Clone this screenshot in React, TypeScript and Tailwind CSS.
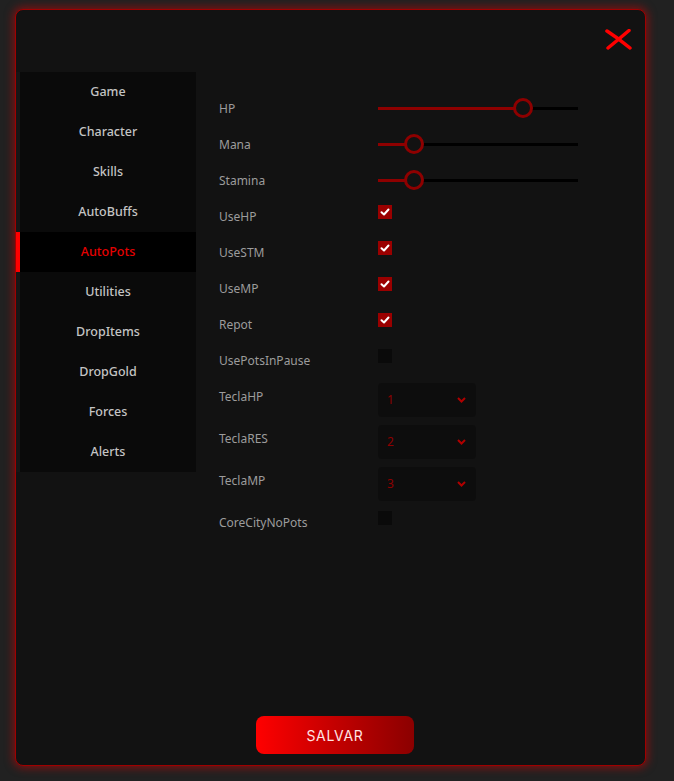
import { useState } from 'react';

const tabs = ['Game', 'Character', 'Skills', 'AutoBuffs', 'AutoPots', 'Utilities', 'DropItems', 'DropGold', 'Forces', 'Alerts'];

const Slider = ({ value }: { value: number }) => (
    <div className="relative mb-[2px] w-[200px] h-[3px] bg-black">
        <div className="absolute left-0 top-0 h-[3px] bg-[#8e0000]" style={{ width: `${value}%` }} />
        <div
            className="absolute top-1/2 w-[20px] h-[20px] -translate-x-1/2 -translate-y-1/2 rounded-full border-[3px] border-[#8e0000] bg-[#121212]"
            style={{ left: `${value}%` }}
        />
    </div>
);

const Check = ({ checked }: { checked: boolean }) => (
    <div className={`mb-[11px] w-[14px] h-[14px] flex items-center justify-center ${checked ? 'bg-[#9a0000]' : 'bg-[#0a0a0a]'}`}>
        {checked && (
            <svg width="10" height="10" viewBox="0 0 10 10">
                <path d="M1.5 5.2 L4 7.5 L8.5 2.5" fill="none" stroke="#fff" strokeWidth="2" strokeLinecap="round" strokeLinejoin="round" />
            </svg>
        )}
    </div>
);

const Select = ({ value }: { value: string }) => (
    <div className="mt-[4px] w-[98px] h-[34px] rounded bg-[#0d0d0d] flex items-center justify-between pl-[9px] pr-[10px]">
        <span className="text-[12px] text-[#8e0000]">{value}</span>
        <svg width="9" height="6" viewBox="0 0 9 6">
            <path d="M1 1 L4.5 4.5 L8 1" fill="none" stroke="#b00000" strokeWidth="2" />
        </svg>
    </div>
);

const Row = ({ label, children, tall }: { label: string; children: React.ReactNode; tall?: boolean }) => (
    <div className={`flex ${tall ? 'h-[42px] items-start' : 'h-9 items-center'}`}>
        <div className={`w-[159px] text-[12px] text-[#9c9c9c] ${tall ? 'leading-9' : ''}`}>{label}</div>
        {children}
    </div>
);

export default function App() {
    const [active, setActive] = useState('AutoPots');

    return (
        <div className="min-h-screen bg-[#212121] pt-[9px] pl-[15px]" style={{ fontFamily: '"Noto Sans", "Open Sans", sans-serif' }}>
            <div className="w-[631px] h-[757px] rounded-lg bg-[#121212] border border-[#a00000] shadow-[0_0_8px_2px_rgba(225,0,0,0.5)] flex flex-col">
                <div className="h-[62px] flex justify-end items-start pt-[19px] pr-[13px]">
                    <svg width="27" height="21" viewBox="0 0 27 21">
                        <path d="M2 2 Q13 9 25 19" fill="none" stroke="#ff0000" strokeWidth="3.5" strokeLinecap="round" />
                        <path d="M24 1.5 Q14 10 3 19" fill="none" stroke="#ff0000" strokeWidth="3.5" strokeLinecap="round" />
                    </svg>
                </div>
                <div className="flex">
                    <div className="w-[180px] flex flex-col">
                        {tabs.map(t => (
                            <button
                                key={t}
                                onClick={() => setActive(t)}
                                className={`h-10 border-l-4 text-[12.5px] font-medium ${t === active ? 'border-[#ff0000] bg-black text-[#e60000]' : 'border-[#161616] bg-[#0a0a0a] text-[#c4c4c4]'}`}
                            >
                                {t}
                            </button>
                        ))}
                    </div>
                    <div className="pl-[23px] pt-[19px] flex flex-col">
                        <Row label="HP"><Slider value={72.5} /></Row>
                        <Row label="Mana"><Slider value={18} /></Row>
                        <Row label="Stamina"><Slider value={18} /></Row>
                        <Row label="UseHP"><Check checked /></Row>
                        <Row label="UseSTM"><Check checked /></Row>
                        <Row label="UseMP"><Check checked /></Row>
                        <Row label="Repot"><Check checked /></Row>
                        <Row label="UsePotsInPause"><Check checked={false} /></Row>
                        <Row label="TeclaHP" tall><Select value="1" /></Row>
                        <Row label="TeclaRES" tall><Select value="2" /></Row>
                        <Row label="TeclaMP" tall><Select value="3" /></Row>
                        <Row label="CoreCityNoPots"><Check checked={false} /></Row>
                    </div>
                </div>
                <div className="mt-auto mb-[11px] flex justify-center pl-[9px]">
                    <button
                        className="w-[158px] h-[38px] rounded-lg bg-gradient-to-r from-[#ff0000] to-[#8b0000] text-[14px] font-normal tracking-wider text-[#ffe4e4]"
                        style={{ fontFamily: 'Inter, "Noto Sans", sans-serif' }}
                    >
                        SALVAR
                    </button>
                </div>
            </div>
        </div>
    );
}
